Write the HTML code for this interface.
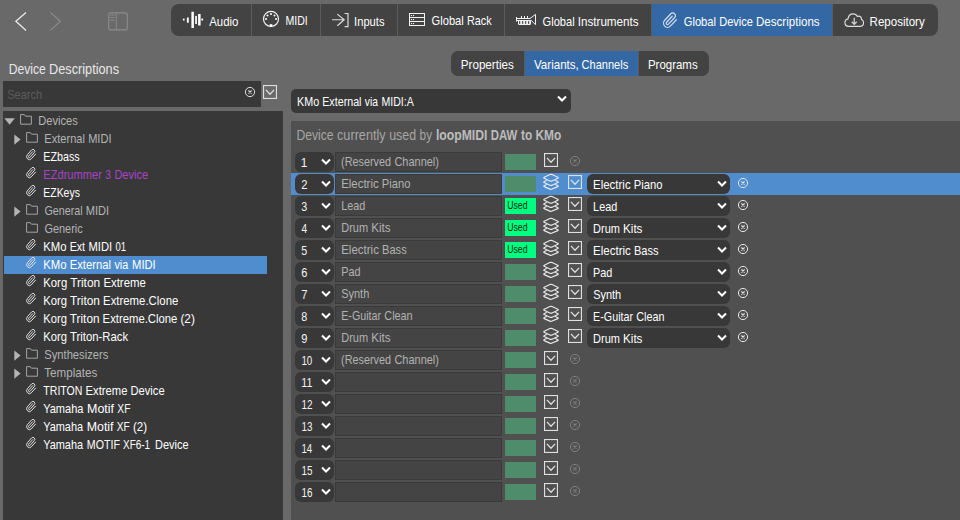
<!DOCTYPE html>
<html><head><meta charset="utf-8"><title>Global Device Descriptions</title>
<style>
html,body{margin:0;padding:0}
body{width:960px;height:520px;overflow:hidden;background:#696969;position:relative;font-family:"Liberation Sans",sans-serif}
#app{position:absolute;left:0;top:0;width:960px;height:520px;overflow:hidden}
#app div,#app svg,#app span{position:absolute}
#app span{left:0;white-space:pre;line-height:1;transform-origin:0 50%;display:block}
</style></head><body><div id="app">
<svg style="left:14px;top:11px" width="14" height="21" viewBox="0 0 14 21" ><path d="M12 1.4 L1.9 10.3 L12 19.4" fill="none" stroke="#ececec" stroke-width="1.3"/></svg>
<svg style="left:49px;top:11px" width="14" height="21" viewBox="0 0 14 21" ><path d="M1.3 1.4 L11.4 10.3 L1.3 19.4" fill="none" stroke="#8e8e8e" stroke-width="1.1"/></svg>
<svg style="left:107px;top:11px" width="22" height="21" viewBox="0 0 22 21" ><rect x="1.7" y="1.9" width="18.6" height="17" rx="2" fill="none" stroke="#8c8c8c" stroke-width="1.1"/><path d="M9.3 2V19M3.2 4.1h4.6M3.2 6.5h4.6M3.2 9.1h4.6" stroke="#8c8c8c" stroke-width="0.9" fill="none"/></svg>
<div style="left:171px;top:4px;width:767px;height:32px;background:#434343;border-radius:8px"></div>
<div style="left:652px;top:4px;width:180px;height:32px;background:#3468a4;"></div>
<div style="left:251px;top:4px;width:1px;height:32px;background:#5c5c5c;"></div>
<div style="left:320px;top:4px;width:1px;height:32px;background:#5c5c5c;"></div>
<div style="left:397px;top:4px;width:1px;height:32px;background:#5c5c5c;"></div>
<div style="left:504px;top:4px;width:1px;height:32px;background:#5c5c5c;"></div>
<div style="left:651px;top:4px;width:1px;height:32px;background:#5c5c5c;"></div>
<div style="left:832px;top:4px;width:1px;height:32px;background:#5c5c5c;"></div>
<svg style="left:182px;top:11px" width="22" height="18" viewBox="0 0 22 18" ><g fill="#fff"><rect x="0.9" y="7.6" width="1.7" height="1.9"/><rect x="4.9" y="6.5" width="1.9" height="5.2"/><rect x="9.4" y="0.75" width="2.5" height="16.3"/><rect x="13.2" y="4.9" width="1.7" height="8.1"/><rect x="16.1" y="3" width="2.5" height="11.5"/><rect x="19.3" y="7.6" width="1.8" height="1.9"/></g></svg>
<svg style="left:262px;top:10px" width="18" height="18" viewBox="0 0 18 18" ><circle cx="9" cy="8.9" r="7.5" fill="none" stroke="#f4f4f4" stroke-width="1.2"/><g fill="#fff"><circle cx="4" cy="9" r="1"/><circle cx="5.5" cy="5.5" r="1"/><circle cx="9" cy="4" r="1"/><circle cx="12.5" cy="5.5" r="1"/><circle cx="14" cy="9" r="1"/><rect x="7.7" y="14.2" width="2.6" height="2.4"/></g></svg>
<svg style="left:331px;top:12px" width="18" height="16" viewBox="0 0 18 16" ><path d="M1.1 7.75h12M6.3 2.1l6.9 5.65-6.9 5.95M13.6 1.5h3.4v13.1h-3.4" fill="none" stroke="#dcdcdc" stroke-width="1.2"/></svg>
<svg style="left:408px;top:12px" width="18" height="15" viewBox="0 0 18 15" ><g fill="none" stroke="#f2f2f2" stroke-width="1"><rect x="1.5" y="1.5" width="15" height="12"/><path d="M1.5 5.5h15M1.5 9.5h15"/></g><g fill="#f2f2f2"><rect x="3" y="3" width="1.1" height="1.1"/><rect x="5" y="3" width="1.1" height="1.1"/><rect x="3" y="7" width="1.1" height="1.1"/><rect x="5" y="7" width="1.1" height="1.1"/><rect x="3" y="11" width="1.1" height="1.1"/><rect x="5" y="11" width="1.1" height="1.1"/></g></svg>
<svg style="left:515px;top:13px" width="22" height="13" viewBox="0 0 22 13" ><g fill="#f0f0f0"><rect x="1" y="4" width="1" height="4.6"/><rect x="1" y="5" width="14.5" height="1"/><rect x="1" y="7" width="15.5" height="1"/><rect x="6" y="3" width="1" height="2"/><rect x="9" y="3" width="1" height="2"/><rect x="12" y="3" width="1" height="2"/><rect x="3" y="7" width="13" height="5" rx="1.2"/></g><g fill="#434343"><rect x="4.1" y="8.1" width="1.1" height="2.8"/><rect x="7.1" y="8.1" width="1.1" height="2.8"/><rect x="10.1" y="8.1" width="1.1" height="2.8"/><rect x="13.1" y="8.1" width="1.1" height="2.8"/></g><path d="M15 5.5L20.5 1.4V11.7L16.3 7.6" fill="none" stroke="#f0f0f0" stroke-width="1" stroke-linejoin="round"/></svg>
<svg style="left:661px;top:11px" width="18" height="18" viewBox="0 0 18 18" ><path transform="translate(1.24,1.0) scale(0.66,0.70)" d="M21.44 11.05l-9.19 9.19a6 6 0 0 1-8.49-8.49l9.19-9.19a4 4 0 0 1 5.66 5.66l-9.2 9.19a2 2 0 0 1-2.83-2.83l8.49-8.48" fill="none" stroke="#d6e1ef" stroke-width="1.75" stroke-linecap="round" stroke-linejoin="round"/></svg>
<svg style="left:843.66px;top:11.65px" width="20.7" height="16.7" viewBox="0 0 22 18" preserveAspectRatio="none"><path d="M5.2 15.5C2.6 15.5 1 13.6 1 11.5C1 9.4 2.3 7.8 4.3 7.4C4.6 4.3 6.8 2 9.6 2C11.6 2 13.2 3 14 4.7C14.4 4.6 14.9 4.5 15.4 4.5C17.4 4.5 18.6 6 18.6 8.2C20 8.8 20.8 10.2 20.8 11.6C20.8 13.8 19.2 15.5 17 15.5Z" fill="none" stroke="#dcdcdc" stroke-width="1.2"/><path d="M10.9 6.2V13M8.2 10.6l2.7 2.7 2.7-2.7" fill="none" stroke="#cfcfcf" stroke-width="1.4"/></svg>
<div style="left:451px;top:51px;width:258px;height:25px;background:#434343;border-radius:7px"></div>
<div style="left:525px;top:51px;width:114px;height:25px;background:#3468a4;"></div>
<div style="left:524px;top:51px;width:1px;height:25px;background:#5c5c5c;"></div>
<div style="left:638px;top:51px;width:1px;height:25px;background:#5c5c5c;"></div>
<div style="left:3px;top:81px;width:258px;height:26px;background:#383838;"></div>
<svg style="left:244px;top:86px" width="12" height="12" viewBox="0 0 12 12" ><circle cx="6" cy="6" r="4.6" fill="none" stroke="#e0e0e0" stroke-width="1"/><path d="M4.4 4.5l3.2 3.1M7.6 4.5l-3.2 3.1" stroke="#e0e0e0" stroke-width="1.1"/></svg>
<svg style="left:263px;top:85px" width="14" height="14" viewBox="0 0 14 14" ><rect x="0.55" y="0.55" width="12.9" height="12.9" fill="none" stroke="#e0e0e0" stroke-width="1.1"/><path d="M2.9 4.9l4.1 4.3 4.1-4.3" fill="none" stroke="#e0e0e0" stroke-width="1.3"/></svg>
<div style="left:3px;top:111px;width:280px;height:409px;background:#383838;"></div>
<div style="left:4px;top:256px;width:263px;height:18px;background:#4f8dcf;"></div>
<svg style="left:4px;top:117px" width="12" height="9" viewBox="0 0 12 9" ><path d="M0.3 1.2h10.6L5.6 7.8z" fill="#b4b4b4"/></svg>
<svg style="left:20px;top:114.2px" width="12" height="11" viewBox="0 0 12 11" ><path d="M0.6 10.2V0.6h3.7l1.1 1.6h6v8z" fill="none" stroke="#ababab" stroke-width="0.95"/></svg>
<svg style="left:14px;top:134px" width="7" height="12" viewBox="0 0 7 12" ><path d="M0.3 0.5v10.2l6.3-5.1z" fill="#b4b4b4"/></svg>
<svg style="left:26px;top:132.2px" width="12" height="11" viewBox="0 0 12 11" ><path d="M0.6 10.2V0.6h3.7l1.1 1.6h6v8z" fill="none" stroke="#ababab" stroke-width="0.95"/></svg>
<svg style="left:25.5px;top:149px" width="12" height="13" viewBox="0 0 12 13" ><path transform="translate(-0.25,-0.35) scale(0.455,0.50)" d="M21.44 11.05l-9.19 9.19a6 6 0 0 1-8.49-8.49l9.19-9.19a4 4 0 0 1 5.66 5.66l-9.2 9.19a2 2 0 0 1-2.83-2.83l8.49-8.48" fill="none" stroke="#e8e8e8" stroke-width="2" stroke-linecap="round" stroke-linejoin="round"/></svg>
<svg style="left:25.5px;top:167px" width="12" height="13" viewBox="0 0 12 13" ><path transform="translate(-0.25,-0.35) scale(0.455,0.50)" d="M21.44 11.05l-9.19 9.19a6 6 0 0 1-8.49-8.49l9.19-9.19a4 4 0 0 1 5.66 5.66l-9.2 9.19a2 2 0 0 1-2.83-2.83l8.49-8.48" fill="none" stroke="#e8e8e8" stroke-width="2" stroke-linecap="round" stroke-linejoin="round"/></svg>
<svg style="left:25.5px;top:185px" width="12" height="13" viewBox="0 0 12 13" ><path transform="translate(-0.25,-0.35) scale(0.455,0.50)" d="M21.44 11.05l-9.19 9.19a6 6 0 0 1-8.49-8.49l9.19-9.19a4 4 0 0 1 5.66 5.66l-9.2 9.19a2 2 0 0 1-2.83-2.83l8.49-8.48" fill="none" stroke="#e8e8e8" stroke-width="2" stroke-linecap="round" stroke-linejoin="round"/></svg>
<svg style="left:14px;top:206px" width="7" height="12" viewBox="0 0 7 12" ><path d="M0.3 0.5v10.2l6.3-5.1z" fill="#b4b4b4"/></svg>
<svg style="left:26px;top:204.2px" width="12" height="11" viewBox="0 0 12 11" ><path d="M0.6 10.2V0.6h3.7l1.1 1.6h6v8z" fill="none" stroke="#ababab" stroke-width="0.95"/></svg>
<svg style="left:26px;top:222.2px" width="12" height="11" viewBox="0 0 12 11" ><path d="M0.6 10.2V0.6h3.7l1.1 1.6h6v8z" fill="none" stroke="#ababab" stroke-width="0.95"/></svg>
<svg style="left:25.5px;top:239px" width="12" height="13" viewBox="0 0 12 13" ><path transform="translate(-0.25,-0.35) scale(0.455,0.50)" d="M21.44 11.05l-9.19 9.19a6 6 0 0 1-8.49-8.49l9.19-9.19a4 4 0 0 1 5.66 5.66l-9.2 9.19a2 2 0 0 1-2.83-2.83l8.49-8.48" fill="none" stroke="#e8e8e8" stroke-width="2" stroke-linecap="round" stroke-linejoin="round"/></svg>
<svg style="left:25.5px;top:257px" width="12" height="13" viewBox="0 0 12 13" ><path transform="translate(-0.25,-0.35) scale(0.455,0.50)" d="M21.44 11.05l-9.19 9.19a6 6 0 0 1-8.49-8.49l9.19-9.19a4 4 0 0 1 5.66 5.66l-9.2 9.19a2 2 0 0 1-2.83-2.83l8.49-8.48" fill="none" stroke="#e8e8e8" stroke-width="2" stroke-linecap="round" stroke-linejoin="round"/></svg>
<svg style="left:25.5px;top:275px" width="12" height="13" viewBox="0 0 12 13" ><path transform="translate(-0.25,-0.35) scale(0.455,0.50)" d="M21.44 11.05l-9.19 9.19a6 6 0 0 1-8.49-8.49l9.19-9.19a4 4 0 0 1 5.66 5.66l-9.2 9.19a2 2 0 0 1-2.83-2.83l8.49-8.48" fill="none" stroke="#e8e8e8" stroke-width="2" stroke-linecap="round" stroke-linejoin="round"/></svg>
<svg style="left:25.5px;top:293px" width="12" height="13" viewBox="0 0 12 13" ><path transform="translate(-0.25,-0.35) scale(0.455,0.50)" d="M21.44 11.05l-9.19 9.19a6 6 0 0 1-8.49-8.49l9.19-9.19a4 4 0 0 1 5.66 5.66l-9.2 9.19a2 2 0 0 1-2.83-2.83l8.49-8.48" fill="none" stroke="#e8e8e8" stroke-width="2" stroke-linecap="round" stroke-linejoin="round"/></svg>
<svg style="left:25.5px;top:311px" width="12" height="13" viewBox="0 0 12 13" ><path transform="translate(-0.25,-0.35) scale(0.455,0.50)" d="M21.44 11.05l-9.19 9.19a6 6 0 0 1-8.49-8.49l9.19-9.19a4 4 0 0 1 5.66 5.66l-9.2 9.19a2 2 0 0 1-2.83-2.83l8.49-8.48" fill="none" stroke="#e8e8e8" stroke-width="2" stroke-linecap="round" stroke-linejoin="round"/></svg>
<svg style="left:25.5px;top:329px" width="12" height="13" viewBox="0 0 12 13" ><path transform="translate(-0.25,-0.35) scale(0.455,0.50)" d="M21.44 11.05l-9.19 9.19a6 6 0 0 1-8.49-8.49l9.19-9.19a4 4 0 0 1 5.66 5.66l-9.2 9.19a2 2 0 0 1-2.83-2.83l8.49-8.48" fill="none" stroke="#e8e8e8" stroke-width="2" stroke-linecap="round" stroke-linejoin="round"/></svg>
<svg style="left:14px;top:350px" width="7" height="12" viewBox="0 0 7 12" ><path d="M0.3 0.5v10.2l6.3-5.1z" fill="#b4b4b4"/></svg>
<svg style="left:26px;top:348.2px" width="12" height="11" viewBox="0 0 12 11" ><path d="M0.6 10.2V0.6h3.7l1.1 1.6h6v8z" fill="none" stroke="#ababab" stroke-width="0.95"/></svg>
<svg style="left:14px;top:368px" width="7" height="12" viewBox="0 0 7 12" ><path d="M0.3 0.5v10.2l6.3-5.1z" fill="#b4b4b4"/></svg>
<svg style="left:26px;top:366.2px" width="12" height="11" viewBox="0 0 12 11" ><path d="M0.6 10.2V0.6h3.7l1.1 1.6h6v8z" fill="none" stroke="#ababab" stroke-width="0.95"/></svg>
<svg style="left:25.5px;top:383px" width="12" height="13" viewBox="0 0 12 13" ><path transform="translate(-0.25,-0.35) scale(0.455,0.50)" d="M21.44 11.05l-9.19 9.19a6 6 0 0 1-8.49-8.49l9.19-9.19a4 4 0 0 1 5.66 5.66l-9.2 9.19a2 2 0 0 1-2.83-2.83l8.49-8.48" fill="none" stroke="#e8e8e8" stroke-width="2" stroke-linecap="round" stroke-linejoin="round"/></svg>
<svg style="left:25.5px;top:401px" width="12" height="13" viewBox="0 0 12 13" ><path transform="translate(-0.25,-0.35) scale(0.455,0.50)" d="M21.44 11.05l-9.19 9.19a6 6 0 0 1-8.49-8.49l9.19-9.19a4 4 0 0 1 5.66 5.66l-9.2 9.19a2 2 0 0 1-2.83-2.83l8.49-8.48" fill="none" stroke="#e8e8e8" stroke-width="2" stroke-linecap="round" stroke-linejoin="round"/></svg>
<svg style="left:25.5px;top:419px" width="12" height="13" viewBox="0 0 12 13" ><path transform="translate(-0.25,-0.35) scale(0.455,0.50)" d="M21.44 11.05l-9.19 9.19a6 6 0 0 1-8.49-8.49l9.19-9.19a4 4 0 0 1 5.66 5.66l-9.2 9.19a2 2 0 0 1-2.83-2.83l8.49-8.48" fill="none" stroke="#e8e8e8" stroke-width="2" stroke-linecap="round" stroke-linejoin="round"/></svg>
<svg style="left:25.5px;top:437px" width="12" height="13" viewBox="0 0 12 13" ><path transform="translate(-0.25,-0.35) scale(0.455,0.50)" d="M21.44 11.05l-9.19 9.19a6 6 0 0 1-8.49-8.49l9.19-9.19a4 4 0 0 1 5.66 5.66l-9.2 9.19a2 2 0 0 1-2.83-2.83l8.49-8.48" fill="none" stroke="#e8e8e8" stroke-width="2" stroke-linecap="round" stroke-linejoin="round"/></svg>
<div style="left:291px;top:89px;width:280px;height:24px;background:#383838;border-radius:5px"></div>
<svg style="left:556.4px;top:94.8px" width="12" height="8" viewBox="0 0 12 8" ><path d="M2 1.5l4 4 4-4" fill="none" stroke="#fff" stroke-width="2"/></svg>
<div style="left:291px;top:121px;width:669px;height:399px;background:#505050;"></div>
<div style="left:295px;top:152px;width:39px;height:20px;background:#383838;border-radius:6px"></div>
<svg style="left:319.5px;top:158.2px" width="12" height="8" viewBox="0 0 12 8" ><path d="M2 1.5l4 4 4-4" fill="none" stroke="#fff" stroke-width="2"/></svg>
<div style="left:335px;top:152px;width:167px;height:20px;background:#444444;box-sizing:border-box;border:1px solid #3a3a3a"></div>
<div style="left:505px;top:154px;width:31px;height:16px;background:#4e8c6c;"></div>
<svg style="left:544px;top:153px" width="14" height="14" viewBox="0 0 14 14" ><rect x="0.55" y="0.55" width="12.9" height="12.9" fill="none" stroke="#e0e0e0" stroke-width="1.1"/><path d="M2.9 4.9l4.1 4.3 4.1-4.3" fill="none" stroke="#e0e0e0" stroke-width="1.3"/></svg>
<svg style="left:569px;top:155px" width="12" height="12" viewBox="0 0 12 12" ><circle cx="6" cy="6" r="4.6" fill="none" stroke="#808080" stroke-width="1"/><path d="M4.4 4.5l3.2 3.1M7.6 4.5l-3.2 3.1" stroke="#808080" stroke-width="1.1"/></svg>
<div style="left:291px;top:173px;width:669px;height:22px;background:#4f8dcf;"></div>
<div style="left:295px;top:174px;width:39px;height:20px;background:#383838;border-radius:6px"></div>
<svg style="left:319.5px;top:180.2px" width="12" height="8" viewBox="0 0 12 8" ><path d="M2 1.5l4 4 4-4" fill="none" stroke="#fff" stroke-width="2"/></svg>
<div style="left:335px;top:174px;width:167px;height:20px;background:#444444;box-sizing:border-box;border:1px solid #3a3a3a"></div>
<div style="left:505px;top:176px;width:31px;height:16px;background:#4e8c6c;"></div>
<svg style="left:542px;top:173px" width="18" height="18" viewBox="0 0 18 18" ><g fill="none" stroke="#eaeaea" stroke-width="1.15" stroke-linejoin="round" stroke-linecap="round"><path d="M7.9 1.6Q9 1.1 10.1 1.6L15.8 4.2Q16.8 4.7 15.8 5.2L10.1 7.9Q9 8.4 7.9 7.9L2.2 5.2Q1.2 4.7 2.2 4.2z"/><path d="M4.4 7.6L2.1 8.65Q1.2 9.1 2.2 9.6L7.9 12.2Q9 12.7 10.1 12.2L15.8 9.6Q16.8 9.1 15.9 8.65L13.6 7.6"/><path d="M4.4 11.6L2.1 12.65Q1.2 13.1 2.2 13.6L7.9 16.1Q9 16.6 10.1 16.1L15.8 13.6Q16.8 13.1 15.9 12.65L13.6 11.6"/></g></svg>
<svg style="left:568px;top:175px" width="14" height="14" viewBox="0 0 14 14" ><rect x="0.55" y="0.55" width="12.9" height="12.9" fill="none" stroke="#e0e0e0" stroke-width="1.1"/><path d="M2.9 4.9l4.1 4.3 4.1-4.3" fill="none" stroke="#e0e0e0" stroke-width="1.3"/></svg>
<div style="left:587px;top:174px;width:143px;height:20px;background:#383838;border-radius:6px"></div>
<svg style="left:715.9px;top:180.4px" width="12" height="8" viewBox="0 0 12 8" ><path d="M2 1.5l4 4 4-4" fill="none" stroke="#fff" stroke-width="2"/></svg>
<svg style="left:737px;top:177px" width="12" height="12" viewBox="0 0 12 12" ><circle cx="6" cy="6" r="4.6" fill="none" stroke="#e6e6e6" stroke-width="1"/><path d="M4.4 4.5l3.2 3.1M7.6 4.5l-3.2 3.1" stroke="#e6e6e6" stroke-width="1.1"/></svg>
<div style="left:295px;top:196px;width:39px;height:20px;background:#383838;border-radius:6px"></div>
<svg style="left:319.5px;top:202.2px" width="12" height="8" viewBox="0 0 12 8" ><path d="M2 1.5l4 4 4-4" fill="none" stroke="#fff" stroke-width="2"/></svg>
<div style="left:335px;top:196px;width:167px;height:20px;background:#444444;box-sizing:border-box;border:1px solid #3a3a3a"></div>
<div style="left:505px;top:198px;width:31px;height:16px;background:#00ff80;"></div>
<svg style="left:542px;top:195px" width="18" height="18" viewBox="0 0 18 18" ><g fill="none" stroke="#eaeaea" stroke-width="1.15" stroke-linejoin="round" stroke-linecap="round"><path d="M7.9 1.6Q9 1.1 10.1 1.6L15.8 4.2Q16.8 4.7 15.8 5.2L10.1 7.9Q9 8.4 7.9 7.9L2.2 5.2Q1.2 4.7 2.2 4.2z"/><path d="M4.4 7.6L2.1 8.65Q1.2 9.1 2.2 9.6L7.9 12.2Q9 12.7 10.1 12.2L15.8 9.6Q16.8 9.1 15.9 8.65L13.6 7.6"/><path d="M4.4 11.6L2.1 12.65Q1.2 13.1 2.2 13.6L7.9 16.1Q9 16.6 10.1 16.1L15.8 13.6Q16.8 13.1 15.9 12.65L13.6 11.6"/></g></svg>
<svg style="left:568px;top:197px" width="14" height="14" viewBox="0 0 14 14" ><rect x="0.55" y="0.55" width="12.9" height="12.9" fill="none" stroke="#e0e0e0" stroke-width="1.1"/><path d="M2.9 4.9l4.1 4.3 4.1-4.3" fill="none" stroke="#e0e0e0" stroke-width="1.3"/></svg>
<div style="left:587px;top:196px;width:143px;height:20px;background:#383838;border-radius:6px"></div>
<svg style="left:715.9px;top:202.4px" width="12" height="8" viewBox="0 0 12 8" ><path d="M2 1.5l4 4 4-4" fill="none" stroke="#fff" stroke-width="2"/></svg>
<svg style="left:737px;top:199px" width="12" height="12" viewBox="0 0 12 12" ><circle cx="6" cy="6" r="4.6" fill="none" stroke="#e6e6e6" stroke-width="1"/><path d="M4.4 4.5l3.2 3.1M7.6 4.5l-3.2 3.1" stroke="#e6e6e6" stroke-width="1.1"/></svg>
<div style="left:295px;top:218px;width:39px;height:20px;background:#383838;border-radius:6px"></div>
<svg style="left:319.5px;top:224.2px" width="12" height="8" viewBox="0 0 12 8" ><path d="M2 1.5l4 4 4-4" fill="none" stroke="#fff" stroke-width="2"/></svg>
<div style="left:335px;top:218px;width:167px;height:20px;background:#444444;box-sizing:border-box;border:1px solid #3a3a3a"></div>
<div style="left:505px;top:220px;width:31px;height:16px;background:#00ff80;"></div>
<svg style="left:542px;top:217px" width="18" height="18" viewBox="0 0 18 18" ><g fill="none" stroke="#eaeaea" stroke-width="1.15" stroke-linejoin="round" stroke-linecap="round"><path d="M7.9 1.6Q9 1.1 10.1 1.6L15.8 4.2Q16.8 4.7 15.8 5.2L10.1 7.9Q9 8.4 7.9 7.9L2.2 5.2Q1.2 4.7 2.2 4.2z"/><path d="M4.4 7.6L2.1 8.65Q1.2 9.1 2.2 9.6L7.9 12.2Q9 12.7 10.1 12.2L15.8 9.6Q16.8 9.1 15.9 8.65L13.6 7.6"/><path d="M4.4 11.6L2.1 12.65Q1.2 13.1 2.2 13.6L7.9 16.1Q9 16.6 10.1 16.1L15.8 13.6Q16.8 13.1 15.9 12.65L13.6 11.6"/></g></svg>
<svg style="left:568px;top:219px" width="14" height="14" viewBox="0 0 14 14" ><rect x="0.55" y="0.55" width="12.9" height="12.9" fill="none" stroke="#e0e0e0" stroke-width="1.1"/><path d="M2.9 4.9l4.1 4.3 4.1-4.3" fill="none" stroke="#e0e0e0" stroke-width="1.3"/></svg>
<div style="left:587px;top:218px;width:143px;height:20px;background:#383838;border-radius:6px"></div>
<svg style="left:715.9px;top:224.4px" width="12" height="8" viewBox="0 0 12 8" ><path d="M2 1.5l4 4 4-4" fill="none" stroke="#fff" stroke-width="2"/></svg>
<svg style="left:737px;top:221px" width="12" height="12" viewBox="0 0 12 12" ><circle cx="6" cy="6" r="4.6" fill="none" stroke="#e6e6e6" stroke-width="1"/><path d="M4.4 4.5l3.2 3.1M7.6 4.5l-3.2 3.1" stroke="#e6e6e6" stroke-width="1.1"/></svg>
<div style="left:295px;top:240px;width:39px;height:20px;background:#383838;border-radius:6px"></div>
<svg style="left:319.5px;top:246.2px" width="12" height="8" viewBox="0 0 12 8" ><path d="M2 1.5l4 4 4-4" fill="none" stroke="#fff" stroke-width="2"/></svg>
<div style="left:335px;top:240px;width:167px;height:20px;background:#444444;box-sizing:border-box;border:1px solid #3a3a3a"></div>
<div style="left:505px;top:242px;width:31px;height:16px;background:#00ff80;"></div>
<svg style="left:542px;top:239px" width="18" height="18" viewBox="0 0 18 18" ><g fill="none" stroke="#eaeaea" stroke-width="1.15" stroke-linejoin="round" stroke-linecap="round"><path d="M7.9 1.6Q9 1.1 10.1 1.6L15.8 4.2Q16.8 4.7 15.8 5.2L10.1 7.9Q9 8.4 7.9 7.9L2.2 5.2Q1.2 4.7 2.2 4.2z"/><path d="M4.4 7.6L2.1 8.65Q1.2 9.1 2.2 9.6L7.9 12.2Q9 12.7 10.1 12.2L15.8 9.6Q16.8 9.1 15.9 8.65L13.6 7.6"/><path d="M4.4 11.6L2.1 12.65Q1.2 13.1 2.2 13.6L7.9 16.1Q9 16.6 10.1 16.1L15.8 13.6Q16.8 13.1 15.9 12.65L13.6 11.6"/></g></svg>
<svg style="left:568px;top:241px" width="14" height="14" viewBox="0 0 14 14" ><rect x="0.55" y="0.55" width="12.9" height="12.9" fill="none" stroke="#e0e0e0" stroke-width="1.1"/><path d="M2.9 4.9l4.1 4.3 4.1-4.3" fill="none" stroke="#e0e0e0" stroke-width="1.3"/></svg>
<div style="left:587px;top:240px;width:143px;height:20px;background:#383838;border-radius:6px"></div>
<svg style="left:715.9px;top:246.4px" width="12" height="8" viewBox="0 0 12 8" ><path d="M2 1.5l4 4 4-4" fill="none" stroke="#fff" stroke-width="2"/></svg>
<svg style="left:737px;top:243px" width="12" height="12" viewBox="0 0 12 12" ><circle cx="6" cy="6" r="4.6" fill="none" stroke="#e6e6e6" stroke-width="1"/><path d="M4.4 4.5l3.2 3.1M7.6 4.5l-3.2 3.1" stroke="#e6e6e6" stroke-width="1.1"/></svg>
<div style="left:295px;top:262px;width:39px;height:20px;background:#383838;border-radius:6px"></div>
<svg style="left:319.5px;top:268.2px" width="12" height="8" viewBox="0 0 12 8" ><path d="M2 1.5l4 4 4-4" fill="none" stroke="#fff" stroke-width="2"/></svg>
<div style="left:335px;top:262px;width:167px;height:20px;background:#444444;box-sizing:border-box;border:1px solid #3a3a3a"></div>
<div style="left:505px;top:264px;width:31px;height:16px;background:#4e8c6c;"></div>
<svg style="left:542px;top:261px" width="18" height="18" viewBox="0 0 18 18" ><g fill="none" stroke="#eaeaea" stroke-width="1.15" stroke-linejoin="round" stroke-linecap="round"><path d="M7.9 1.6Q9 1.1 10.1 1.6L15.8 4.2Q16.8 4.7 15.8 5.2L10.1 7.9Q9 8.4 7.9 7.9L2.2 5.2Q1.2 4.7 2.2 4.2z"/><path d="M4.4 7.6L2.1 8.65Q1.2 9.1 2.2 9.6L7.9 12.2Q9 12.7 10.1 12.2L15.8 9.6Q16.8 9.1 15.9 8.65L13.6 7.6"/><path d="M4.4 11.6L2.1 12.65Q1.2 13.1 2.2 13.6L7.9 16.1Q9 16.6 10.1 16.1L15.8 13.6Q16.8 13.1 15.9 12.65L13.6 11.6"/></g></svg>
<svg style="left:568px;top:263px" width="14" height="14" viewBox="0 0 14 14" ><rect x="0.55" y="0.55" width="12.9" height="12.9" fill="none" stroke="#e0e0e0" stroke-width="1.1"/><path d="M2.9 4.9l4.1 4.3 4.1-4.3" fill="none" stroke="#e0e0e0" stroke-width="1.3"/></svg>
<div style="left:587px;top:262px;width:143px;height:20px;background:#383838;border-radius:6px"></div>
<svg style="left:715.9px;top:268.4px" width="12" height="8" viewBox="0 0 12 8" ><path d="M2 1.5l4 4 4-4" fill="none" stroke="#fff" stroke-width="2"/></svg>
<svg style="left:737px;top:265px" width="12" height="12" viewBox="0 0 12 12" ><circle cx="6" cy="6" r="4.6" fill="none" stroke="#e6e6e6" stroke-width="1"/><path d="M4.4 4.5l3.2 3.1M7.6 4.5l-3.2 3.1" stroke="#e6e6e6" stroke-width="1.1"/></svg>
<div style="left:295px;top:284px;width:39px;height:20px;background:#383838;border-radius:6px"></div>
<svg style="left:319.5px;top:290.2px" width="12" height="8" viewBox="0 0 12 8" ><path d="M2 1.5l4 4 4-4" fill="none" stroke="#fff" stroke-width="2"/></svg>
<div style="left:335px;top:284px;width:167px;height:20px;background:#444444;box-sizing:border-box;border:1px solid #3a3a3a"></div>
<div style="left:505px;top:286px;width:31px;height:16px;background:#4e8c6c;"></div>
<svg style="left:542px;top:283px" width="18" height="18" viewBox="0 0 18 18" ><g fill="none" stroke="#eaeaea" stroke-width="1.15" stroke-linejoin="round" stroke-linecap="round"><path d="M7.9 1.6Q9 1.1 10.1 1.6L15.8 4.2Q16.8 4.7 15.8 5.2L10.1 7.9Q9 8.4 7.9 7.9L2.2 5.2Q1.2 4.7 2.2 4.2z"/><path d="M4.4 7.6L2.1 8.65Q1.2 9.1 2.2 9.6L7.9 12.2Q9 12.7 10.1 12.2L15.8 9.6Q16.8 9.1 15.9 8.65L13.6 7.6"/><path d="M4.4 11.6L2.1 12.65Q1.2 13.1 2.2 13.6L7.9 16.1Q9 16.6 10.1 16.1L15.8 13.6Q16.8 13.1 15.9 12.65L13.6 11.6"/></g></svg>
<svg style="left:568px;top:285px" width="14" height="14" viewBox="0 0 14 14" ><rect x="0.55" y="0.55" width="12.9" height="12.9" fill="none" stroke="#e0e0e0" stroke-width="1.1"/><path d="M2.9 4.9l4.1 4.3 4.1-4.3" fill="none" stroke="#e0e0e0" stroke-width="1.3"/></svg>
<div style="left:587px;top:284px;width:143px;height:20px;background:#383838;border-radius:6px"></div>
<svg style="left:715.9px;top:290.4px" width="12" height="8" viewBox="0 0 12 8" ><path d="M2 1.5l4 4 4-4" fill="none" stroke="#fff" stroke-width="2"/></svg>
<svg style="left:737px;top:287px" width="12" height="12" viewBox="0 0 12 12" ><circle cx="6" cy="6" r="4.6" fill="none" stroke="#e6e6e6" stroke-width="1"/><path d="M4.4 4.5l3.2 3.1M7.6 4.5l-3.2 3.1" stroke="#e6e6e6" stroke-width="1.1"/></svg>
<div style="left:295px;top:306px;width:39px;height:20px;background:#383838;border-radius:6px"></div>
<svg style="left:319.5px;top:312.2px" width="12" height="8" viewBox="0 0 12 8" ><path d="M2 1.5l4 4 4-4" fill="none" stroke="#fff" stroke-width="2"/></svg>
<div style="left:335px;top:306px;width:167px;height:20px;background:#444444;box-sizing:border-box;border:1px solid #3a3a3a"></div>
<div style="left:505px;top:308px;width:31px;height:16px;background:#4e8c6c;"></div>
<svg style="left:542px;top:305px" width="18" height="18" viewBox="0 0 18 18" ><g fill="none" stroke="#eaeaea" stroke-width="1.15" stroke-linejoin="round" stroke-linecap="round"><path d="M7.9 1.6Q9 1.1 10.1 1.6L15.8 4.2Q16.8 4.7 15.8 5.2L10.1 7.9Q9 8.4 7.9 7.9L2.2 5.2Q1.2 4.7 2.2 4.2z"/><path d="M4.4 7.6L2.1 8.65Q1.2 9.1 2.2 9.6L7.9 12.2Q9 12.7 10.1 12.2L15.8 9.6Q16.8 9.1 15.9 8.65L13.6 7.6"/><path d="M4.4 11.6L2.1 12.65Q1.2 13.1 2.2 13.6L7.9 16.1Q9 16.6 10.1 16.1L15.8 13.6Q16.8 13.1 15.9 12.65L13.6 11.6"/></g></svg>
<svg style="left:568px;top:307px" width="14" height="14" viewBox="0 0 14 14" ><rect x="0.55" y="0.55" width="12.9" height="12.9" fill="none" stroke="#e0e0e0" stroke-width="1.1"/><path d="M2.9 4.9l4.1 4.3 4.1-4.3" fill="none" stroke="#e0e0e0" stroke-width="1.3"/></svg>
<div style="left:587px;top:306px;width:143px;height:20px;background:#383838;border-radius:6px"></div>
<svg style="left:715.9px;top:312.4px" width="12" height="8" viewBox="0 0 12 8" ><path d="M2 1.5l4 4 4-4" fill="none" stroke="#fff" stroke-width="2"/></svg>
<svg style="left:737px;top:309px" width="12" height="12" viewBox="0 0 12 12" ><circle cx="6" cy="6" r="4.6" fill="none" stroke="#e6e6e6" stroke-width="1"/><path d="M4.4 4.5l3.2 3.1M7.6 4.5l-3.2 3.1" stroke="#e6e6e6" stroke-width="1.1"/></svg>
<div style="left:295px;top:328px;width:39px;height:20px;background:#383838;border-radius:6px"></div>
<svg style="left:319.5px;top:334.2px" width="12" height="8" viewBox="0 0 12 8" ><path d="M2 1.5l4 4 4-4" fill="none" stroke="#fff" stroke-width="2"/></svg>
<div style="left:335px;top:328px;width:167px;height:20px;background:#444444;box-sizing:border-box;border:1px solid #3a3a3a"></div>
<div style="left:505px;top:330px;width:31px;height:16px;background:#4e8c6c;"></div>
<svg style="left:542px;top:327px" width="18" height="18" viewBox="0 0 18 18" ><g fill="none" stroke="#eaeaea" stroke-width="1.15" stroke-linejoin="round" stroke-linecap="round"><path d="M7.9 1.6Q9 1.1 10.1 1.6L15.8 4.2Q16.8 4.7 15.8 5.2L10.1 7.9Q9 8.4 7.9 7.9L2.2 5.2Q1.2 4.7 2.2 4.2z"/><path d="M4.4 7.6L2.1 8.65Q1.2 9.1 2.2 9.6L7.9 12.2Q9 12.7 10.1 12.2L15.8 9.6Q16.8 9.1 15.9 8.65L13.6 7.6"/><path d="M4.4 11.6L2.1 12.65Q1.2 13.1 2.2 13.6L7.9 16.1Q9 16.6 10.1 16.1L15.8 13.6Q16.8 13.1 15.9 12.65L13.6 11.6"/></g></svg>
<svg style="left:568px;top:329px" width="14" height="14" viewBox="0 0 14 14" ><rect x="0.55" y="0.55" width="12.9" height="12.9" fill="none" stroke="#e0e0e0" stroke-width="1.1"/><path d="M2.9 4.9l4.1 4.3 4.1-4.3" fill="none" stroke="#e0e0e0" stroke-width="1.3"/></svg>
<div style="left:587px;top:328px;width:143px;height:20px;background:#383838;border-radius:6px"></div>
<svg style="left:715.9px;top:334.4px" width="12" height="8" viewBox="0 0 12 8" ><path d="M2 1.5l4 4 4-4" fill="none" stroke="#fff" stroke-width="2"/></svg>
<svg style="left:737px;top:331px" width="12" height="12" viewBox="0 0 12 12" ><circle cx="6" cy="6" r="4.6" fill="none" stroke="#e6e6e6" stroke-width="1"/><path d="M4.4 4.5l3.2 3.1M7.6 4.5l-3.2 3.1" stroke="#e6e6e6" stroke-width="1.1"/></svg>
<div style="left:295px;top:350px;width:39px;height:20px;background:#383838;border-radius:6px"></div>
<svg style="left:319.5px;top:356.2px" width="12" height="8" viewBox="0 0 12 8" ><path d="M2 1.5l4 4 4-4" fill="none" stroke="#fff" stroke-width="2"/></svg>
<div style="left:335px;top:350px;width:167px;height:20px;background:#444444;box-sizing:border-box;border:1px solid #3a3a3a"></div>
<div style="left:505px;top:352px;width:31px;height:16px;background:#4e8c6c;"></div>
<svg style="left:544px;top:351px" width="14" height="14" viewBox="0 0 14 14" ><rect x="0.55" y="0.55" width="12.9" height="12.9" fill="none" stroke="#e0e0e0" stroke-width="1.1"/><path d="M2.9 4.9l4.1 4.3 4.1-4.3" fill="none" stroke="#e0e0e0" stroke-width="1.3"/></svg>
<svg style="left:569px;top:353px" width="12" height="12" viewBox="0 0 12 12" ><circle cx="6" cy="6" r="4.6" fill="none" stroke="#808080" stroke-width="1"/><path d="M4.4 4.5l3.2 3.1M7.6 4.5l-3.2 3.1" stroke="#808080" stroke-width="1.1"/></svg>
<div style="left:295px;top:372px;width:39px;height:20px;background:#383838;border-radius:6px"></div>
<svg style="left:319.5px;top:378.2px" width="12" height="8" viewBox="0 0 12 8" ><path d="M2 1.5l4 4 4-4" fill="none" stroke="#fff" stroke-width="2"/></svg>
<div style="left:335px;top:372px;width:167px;height:20px;background:#444444;box-sizing:border-box;border:1px solid #3a3a3a"></div>
<div style="left:505px;top:374px;width:31px;height:16px;background:#4e8c6c;"></div>
<svg style="left:544px;top:373px" width="14" height="14" viewBox="0 0 14 14" ><rect x="0.55" y="0.55" width="12.9" height="12.9" fill="none" stroke="#e0e0e0" stroke-width="1.1"/><path d="M2.9 4.9l4.1 4.3 4.1-4.3" fill="none" stroke="#e0e0e0" stroke-width="1.3"/></svg>
<svg style="left:569px;top:375px" width="12" height="12" viewBox="0 0 12 12" ><circle cx="6" cy="6" r="4.6" fill="none" stroke="#808080" stroke-width="1"/><path d="M4.4 4.5l3.2 3.1M7.6 4.5l-3.2 3.1" stroke="#808080" stroke-width="1.1"/></svg>
<div style="left:295px;top:394px;width:39px;height:20px;background:#383838;border-radius:6px"></div>
<svg style="left:319.5px;top:400.2px" width="12" height="8" viewBox="0 0 12 8" ><path d="M2 1.5l4 4 4-4" fill="none" stroke="#fff" stroke-width="2"/></svg>
<div style="left:335px;top:394px;width:167px;height:20px;background:#444444;box-sizing:border-box;border:1px solid #3a3a3a"></div>
<div style="left:505px;top:396px;width:31px;height:16px;background:#4e8c6c;"></div>
<svg style="left:544px;top:395px" width="14" height="14" viewBox="0 0 14 14" ><rect x="0.55" y="0.55" width="12.9" height="12.9" fill="none" stroke="#e0e0e0" stroke-width="1.1"/><path d="M2.9 4.9l4.1 4.3 4.1-4.3" fill="none" stroke="#e0e0e0" stroke-width="1.3"/></svg>
<svg style="left:569px;top:397px" width="12" height="12" viewBox="0 0 12 12" ><circle cx="6" cy="6" r="4.6" fill="none" stroke="#808080" stroke-width="1"/><path d="M4.4 4.5l3.2 3.1M7.6 4.5l-3.2 3.1" stroke="#808080" stroke-width="1.1"/></svg>
<div style="left:295px;top:416px;width:39px;height:20px;background:#383838;border-radius:6px"></div>
<svg style="left:319.5px;top:422.2px" width="12" height="8" viewBox="0 0 12 8" ><path d="M2 1.5l4 4 4-4" fill="none" stroke="#fff" stroke-width="2"/></svg>
<div style="left:335px;top:416px;width:167px;height:20px;background:#444444;box-sizing:border-box;border:1px solid #3a3a3a"></div>
<div style="left:505px;top:418px;width:31px;height:16px;background:#4e8c6c;"></div>
<svg style="left:544px;top:417px" width="14" height="14" viewBox="0 0 14 14" ><rect x="0.55" y="0.55" width="12.9" height="12.9" fill="none" stroke="#e0e0e0" stroke-width="1.1"/><path d="M2.9 4.9l4.1 4.3 4.1-4.3" fill="none" stroke="#e0e0e0" stroke-width="1.3"/></svg>
<svg style="left:569px;top:419px" width="12" height="12" viewBox="0 0 12 12" ><circle cx="6" cy="6" r="4.6" fill="none" stroke="#808080" stroke-width="1"/><path d="M4.4 4.5l3.2 3.1M7.6 4.5l-3.2 3.1" stroke="#808080" stroke-width="1.1"/></svg>
<div style="left:295px;top:438px;width:39px;height:20px;background:#383838;border-radius:6px"></div>
<svg style="left:319.5px;top:444.2px" width="12" height="8" viewBox="0 0 12 8" ><path d="M2 1.5l4 4 4-4" fill="none" stroke="#fff" stroke-width="2"/></svg>
<div style="left:335px;top:438px;width:167px;height:20px;background:#444444;box-sizing:border-box;border:1px solid #3a3a3a"></div>
<div style="left:505px;top:440px;width:31px;height:16px;background:#4e8c6c;"></div>
<svg style="left:544px;top:439px" width="14" height="14" viewBox="0 0 14 14" ><rect x="0.55" y="0.55" width="12.9" height="12.9" fill="none" stroke="#e0e0e0" stroke-width="1.1"/><path d="M2.9 4.9l4.1 4.3 4.1-4.3" fill="none" stroke="#e0e0e0" stroke-width="1.3"/></svg>
<svg style="left:569px;top:441px" width="12" height="12" viewBox="0 0 12 12" ><circle cx="6" cy="6" r="4.6" fill="none" stroke="#808080" stroke-width="1"/><path d="M4.4 4.5l3.2 3.1M7.6 4.5l-3.2 3.1" stroke="#808080" stroke-width="1.1"/></svg>
<div style="left:295px;top:460px;width:39px;height:20px;background:#383838;border-radius:6px"></div>
<svg style="left:319.5px;top:466.2px" width="12" height="8" viewBox="0 0 12 8" ><path d="M2 1.5l4 4 4-4" fill="none" stroke="#fff" stroke-width="2"/></svg>
<div style="left:335px;top:460px;width:167px;height:20px;background:#444444;box-sizing:border-box;border:1px solid #3a3a3a"></div>
<div style="left:505px;top:462px;width:31px;height:16px;background:#4e8c6c;"></div>
<svg style="left:544px;top:461px" width="14" height="14" viewBox="0 0 14 14" ><rect x="0.55" y="0.55" width="12.9" height="12.9" fill="none" stroke="#e0e0e0" stroke-width="1.1"/><path d="M2.9 4.9l4.1 4.3 4.1-4.3" fill="none" stroke="#e0e0e0" stroke-width="1.3"/></svg>
<svg style="left:569px;top:463px" width="12" height="12" viewBox="0 0 12 12" ><circle cx="6" cy="6" r="4.6" fill="none" stroke="#808080" stroke-width="1"/><path d="M4.4 4.5l3.2 3.1M7.6 4.5l-3.2 3.1" stroke="#808080" stroke-width="1.1"/></svg>
<div style="left:295px;top:482px;width:39px;height:20px;background:#383838;border-radius:6px"></div>
<svg style="left:319.5px;top:488.2px" width="12" height="8" viewBox="0 0 12 8" ><path d="M2 1.5l4 4 4-4" fill="none" stroke="#fff" stroke-width="2"/></svg>
<div style="left:335px;top:482px;width:167px;height:20px;background:#444444;box-sizing:border-box;border:1px solid #3a3a3a"></div>
<div style="left:505px;top:484px;width:31px;height:16px;background:#4e8c6c;"></div>
<svg style="left:544px;top:483px" width="14" height="14" viewBox="0 0 14 14" ><rect x="0.55" y="0.55" width="12.9" height="12.9" fill="none" stroke="#e0e0e0" stroke-width="1.1"/><path d="M2.9 4.9l4.1 4.3 4.1-4.3" fill="none" stroke="#e0e0e0" stroke-width="1.3"/></svg>
<svg style="left:569px;top:485px" width="12" height="12" viewBox="0 0 12 12" ><circle cx="6" cy="6" r="4.6" fill="none" stroke="#808080" stroke-width="1"/><path d="M4.4 4.5l3.2 3.1M7.6 4.5l-3.2 3.1" stroke="#808080" stroke-width="1.1"/></svg>
<span style="top:15.00px;font-size:13.0px;color:#fff;transform:translateX(209.23px) scaleX(0.8782)">Audio</span>
<span style="top:14.00px;font-size:13.0px;color:#fff;transform:translateX(285.48px) scaleX(0.8139)">MIDI</span>
<span style="top:15.00px;font-size:13.0px;color:#fff;transform:translateX(354.12px) scaleX(0.8562)">Inputs</span>
<span style="top:14.00px;font-size:13.0px;color:#fff;transform:translateX(431.59px) scaleX(0.8568)">Global </span>
<span style="top:14.00px;font-size:13.0px;color:#fff;transform:translateX(467.03px) scaleX(0.8306)">Rack</span>
<span style="top:15.00px;font-size:13.0px;color:#fff;transform:translateX(542.59px) scaleX(0.8542)">Global </span>
<span style="top:15.00px;font-size:13.0px;color:#fff;transform:translateX(577.77px) scaleX(0.8951)">Instruments</span>
<span style="top:15.00px;font-size:13.0px;color:#fff;transform:translateX(683.79px) scaleX(0.8564)">Global </span>
<span style="top:15.00px;font-size:13.0px;color:#fff;transform:translateX(719.19px) scaleX(0.8492)">Device </span>
<span style="top:15.00px;font-size:13.0px;color:#fff;transform:translateX(755.95px) scaleX(0.8908)">Descriptions</span>
<span style="top:15.00px;font-size:13.0px;color:#fff;transform:translateX(869.60px) scaleX(0.8862)">Repository</span>
<span style="top:58.00px;font-size:13.0px;color:#fff;transform:translateX(460.80px) scaleX(0.8941)">Properties</span>
<span style="top:58.00px;font-size:13.0px;color:#fff;transform:translateX(534.00px) scaleX(0.8907)">Variants, </span>
<span style="top:58.00px;font-size:13.0px;color:#fff;transform:translateX(581.56px) scaleX(0.8481)">Channels</span>
<span style="top:58.00px;font-size:13.0px;color:#fff;transform:translateX(647.91px) scaleX(0.8828)">Programs</span>
<span style="top:62.00px;font-size:14.0px;color:#e8e8e8;transform:translateX(8.66px) scaleX(0.8661)">Device </span>
<span style="top:62.00px;font-size:14.0px;color:#e8e8e8;transform:translateX(49.03px) scaleX(0.9084)">Descriptions</span>
<span style="top:88.66px;font-size:12.67px;color:#5c5c5c;transform:translateX(7.25px) scaleX(0.8680)">Search</span>
<span style="top:114.66px;font-size:12.67px;color:#b4b4b4;transform:translateX(38.28px) scaleX(0.8778)">Devices</span>
<span style="top:132.66px;font-size:12.67px;color:#b4b4b4;transform:translateX(44.27px) scaleX(0.8770)">External </span>
<span style="top:132.66px;font-size:12.67px;color:#b4b4b4;transform:translateX(88.17px) scaleX(0.8731)">MIDI</span>
<span style="top:150.66px;font-size:12.67px;color:#fff;transform:translateX(43.29px) scaleX(0.8473)">EZbass</span>
<span style="top:168.66px;font-size:12.67px;color:#a844c8;transform:translateX(43.27px) scaleX(0.8789)">EZdrummer </span>
<span style="top:168.66px;font-size:12.67px;color:#a844c8;transform:translateX(105.25px) scaleX(0.8179)">3 </span>
<span style="top:168.66px;font-size:12.67px;color:#a844c8;transform:translateX(114.41px) scaleX(0.8703)">Device</span>
<span style="top:186.66px;font-size:12.67px;color:#fff;transform:translateX(43.32px) scaleX(0.8245)">EZKeys</span>
<span style="top:204.66px;font-size:12.67px;color:#b4b4b4;transform:translateX(44.44px) scaleX(0.8476)">General </span>
<span style="top:204.66px;font-size:12.67px;color:#b4b4b4;transform:translateX(85.82px) scaleX(0.8751)">MIDI</span>
<span style="top:222.66px;font-size:12.67px;color:#b4b4b4;transform:translateX(44.43px) scaleX(0.8649)">Generic</span>
<span style="top:240.66px;font-size:12.67px;color:#fff;transform:translateX(43.27px) scaleX(0.8904)">KMo </span>
<span style="top:240.66px;font-size:12.67px;color:#fff;transform:translateX(69.65px) scaleX(0.8435)">Ext </span>
<span style="top:240.66px;font-size:12.67px;color:#fff;transform:translateX(88.54px) scaleX(0.8841)">MIDI </span>
<span style="top:240.66px;font-size:12.67px;color:#fff;transform:translateX(115.46px) scaleX(0.7530)">01</span>
<span style="top:258.67px;font-size:12.67px;color:#fff;transform:translateX(43.27px) scaleX(0.8935)">KMo </span>
<span style="top:258.67px;font-size:12.67px;color:#fff;transform:translateX(69.70px) scaleX(0.8904)">External </span>
<span style="top:258.67px;font-size:12.67px;color:#fff;transform:translateX(114.45px) scaleX(0.8553)">via </span>
<span style="top:258.67px;font-size:12.67px;color:#fff;transform:translateX(132.03px) scaleX(0.8872)">MIDI</span>
<span style="top:276.67px;font-size:12.67px;color:#fff;transform:translateX(43.29px) scaleX(0.8930)">Korg </span>
<span style="top:276.67px;font-size:12.67px;color:#fff;transform:translateX(70.16px) scaleX(0.9424)">Triton </span>
<span style="top:276.67px;font-size:12.67px;color:#fff;transform:translateX(103.39px) scaleX(0.9003)">Extreme</span>
<span style="top:294.67px;font-size:12.67px;color:#fff;transform:translateX(43.28px) scaleX(0.8882)">Korg </span>
<span style="top:294.67px;font-size:12.67px;color:#fff;transform:translateX(70.02px) scaleX(0.9374)">Triton </span>
<span style="top:294.67px;font-size:12.67px;color:#fff;transform:translateX(103.07px) scaleX(0.8988)">Extreme.Clone</span>
<span style="top:312.67px;font-size:12.67px;color:#fff;transform:translateX(43.28px) scaleX(0.8816)">Korg </span>
<span style="top:312.67px;font-size:12.67px;color:#fff;transform:translateX(69.82px) scaleX(0.9304)">Triton </span>
<span style="top:312.67px;font-size:12.67px;color:#fff;transform:translateX(102.62px) scaleX(0.8921)">Extreme.Clone </span>
<span style="top:312.67px;font-size:12.67px;color:#fff;transform:translateX(180.39px) scaleX(0.9337)">(2)</span>
<span style="top:330.67px;font-size:12.67px;color:#fff;transform:translateX(43.28px) scaleX(0.8853)">Korg </span>
<span style="top:330.67px;font-size:12.67px;color:#fff;transform:translateX(69.94px) scaleX(0.8954)">Triton-Rack</span>
<span style="top:348.67px;font-size:12.67px;color:#b4b4b4;transform:translateX(44.22px) scaleX(0.8849)">Synthesizers</span>
<span style="top:366.67px;font-size:12.67px;color:#b4b4b4;transform:translateX(44.32px) scaleX(0.9167)">Templates</span>
<span style="top:384.67px;font-size:12.67px;color:#fff;transform:translateX(43.35px) scaleX(0.8317)">TRITON </span>
<span style="top:384.67px;font-size:12.67px;color:#fff;transform:translateX(85.55px) scaleX(0.8887)">Extreme </span>
<span style="top:384.67px;font-size:12.67px;color:#fff;transform:translateX(130.51px) scaleX(0.8808)">Device</span>
<span style="top:402.67px;font-size:12.67px;color:#fff;transform:translateX(43.15px) scaleX(0.8717)">Yamaha </span>
<span style="top:402.67px;font-size:12.67px;color:#fff;transform:translateX(87.03px) scaleX(0.9857)">Motif </span>
<span style="top:402.67px;font-size:12.67px;color:#fff;transform:translateX(117.37px) scaleX(0.8109)">XF</span>
<span style="top:420.67px;font-size:12.67px;color:#fff;transform:translateX(43.15px) scaleX(0.8651)">Yamaha </span>
<span style="top:420.67px;font-size:12.67px;color:#fff;transform:translateX(86.69px) scaleX(0.9782)">Motif </span>
<span style="top:420.67px;font-size:12.67px;color:#fff;transform:translateX(116.81px) scaleX(0.8048)">XF </span>
<span style="top:420.67px;font-size:12.67px;color:#fff;transform:translateX(132.89px) scaleX(0.9190)">(2)</span>
<span style="top:438.67px;font-size:12.67px;color:#fff;transform:translateX(43.15px) scaleX(0.8640)">Yamaha </span>
<span style="top:438.67px;font-size:12.67px;color:#fff;transform:translateX(86.78px) scaleX(0.8418)">MOTIF </span>
<span style="top:438.67px;font-size:12.67px;color:#fff;transform:translateX(123.08px) scaleX(0.7852)">XF6-1 </span>
<span style="top:438.67px;font-size:12.67px;color:#fff;transform:translateX(154.97px) scaleX(0.8662)">Device</span>
<span style="top:95.66px;font-size:12.67px;color:#fff;transform:translateX(297.07px) scaleX(0.8495)">KMo </span>
<span style="top:95.66px;font-size:12.67px;color:#fff;transform:translateX(322.20px) scaleX(0.8465)">External </span>
<span style="top:95.66px;font-size:12.67px;color:#fff;transform:translateX(364.74px) scaleX(0.8132)">via </span>
<span style="top:95.66px;font-size:12.67px;color:#fff;transform:translateX(381.46px) scaleX(0.8351)">MIDI:A</span>
<span style="top:128.00px;font-size:14.0px;color:#a6a6a6;transform:translateX(296.45px) scaleX(0.8686)">Device </span>
<span style="top:128.00px;font-size:14.0px;color:#a6a6a6;transform:translateX(337.04px) scaleX(0.9044)">currently </span>
<span style="top:128.00px;font-size:14.0px;color:#a6a6a6;transform:translateX(389.20px) scaleX(0.8835)">used </span>
<span style="top:128.00px;font-size:14.0px;color:#a6a6a6;transform:translateX(419.62px) scaleX(0.8418)">by</span>
<span style="top:128.00px;font-size:14.0px;color:#bcbcbc;font-weight:700;transform:translateX(435.90px) scaleX(0.8708)">loopMIDI </span>
<span style="top:128.00px;font-size:14.0px;color:#bcbcbc;font-weight:700;transform:translateX(490.80px) scaleX(0.8130)">DAW </span>
<span style="top:128.00px;font-size:14.0px;color:#bcbcbc;font-weight:700;transform:translateX(520.94px) scaleX(0.8508)">to </span>
<span style="top:128.00px;font-size:14.0px;color:#bcbcbc;font-weight:700;transform:translateX(535.51px) scaleX(0.8509)">KMo</span>
<span style="top:156.66px;font-size:12.67px;color:#f4f4f4;transform:translateX(300.85px) scaleX(0.9335)">1</span>
<span style="top:155.66px;font-size:12.67px;color:#b2b2b2;transform:translateX(341.08px) scaleX(0.8566)">(Reserved </span>
<span style="top:155.66px;font-size:12.67px;color:#b2b2b2;transform:translateX(394.41px) scaleX(0.8665)">Channel)</span>
<span style="top:178.66px;font-size:12.67px;color:#f4f4f4;transform:translateX(301.19px) scaleX(0.8835)">2</span>
<span style="top:177.66px;font-size:12.67px;color:#b2b2b2;transform:translateX(341.16px) scaleX(0.9050)">Electric </span>
<span style="top:177.66px;font-size:12.67px;color:#b2b2b2;transform:translateX(381.85px) scaleX(0.8839)">Piano</span>
<span style="top:178.66px;font-size:12.67px;color:#fff;transform:translateX(593.06px) scaleX(0.9050)">Electric </span>
<span style="top:178.66px;font-size:12.67px;color:#fff;transform:translateX(633.75px) scaleX(0.8839)">Piano</span>
<span style="top:200.66px;font-size:12.67px;color:#f4f4f4;transform:translateX(301.34px) scaleX(0.8489)">3</span>
<span style="top:199.66px;font-size:12.67px;color:#b2b2b2;transform:translateX(341.21px) scaleX(0.8555)">Lead</span>
<span style="top:199.66px;font-size:10.67px;color:#00280e;transform:translateX(507.18px) scaleX(0.8169)">Used</span>
<span style="top:200.66px;font-size:12.67px;color:#fff;transform:translateX(593.11px) scaleX(0.8555)">Lead</span>
<span style="top:222.66px;font-size:12.67px;color:#f4f4f4;transform:translateX(301.52px) scaleX(0.7988)">4</span>
<span style="top:221.66px;font-size:12.67px;color:#b2b2b2;transform:translateX(341.20px) scaleX(0.8691)">Drum </span>
<span style="top:221.66px;font-size:12.67px;color:#b2b2b2;transform:translateX(371.16px) scaleX(0.9173)">Kits</span>
<span style="top:221.66px;font-size:10.67px;color:#00280e;transform:translateX(507.18px) scaleX(0.8169)">Used</span>
<span style="top:222.66px;font-size:12.67px;color:#fff;transform:translateX(593.10px) scaleX(0.8691)">Drum </span>
<span style="top:222.66px;font-size:12.67px;color:#fff;transform:translateX(623.06px) scaleX(0.9173)">Kits</span>
<span style="top:244.66px;font-size:12.67px;color:#f4f4f4;transform:translateX(301.32px) scaleX(0.8489)">5</span>
<span style="top:243.66px;font-size:12.67px;color:#b2b2b2;transform:translateX(341.15px) scaleX(0.9096)">Electric </span>
<span style="top:243.66px;font-size:12.67px;color:#b2b2b2;transform:translateX(382.07px) scaleX(0.8754)">Bass</span>
<span style="top:243.66px;font-size:10.67px;color:#00280e;transform:translateX(507.18px) scaleX(0.8169)">Used</span>
<span style="top:244.66px;font-size:12.67px;color:#fff;transform:translateX(593.05px) scaleX(0.9096)">Electric </span>
<span style="top:244.66px;font-size:12.67px;color:#fff;transform:translateX(633.97px) scaleX(0.8754)">Bass</span>
<span style="top:266.67px;font-size:12.67px;color:#f4f4f4;transform:translateX(301.19px) scaleX(0.8723)">6</span>
<span style="top:265.67px;font-size:12.67px;color:#b2b2b2;transform:translateX(341.21px) scaleX(0.8561)">Pad</span>
<span style="top:266.67px;font-size:12.67px;color:#fff;transform:translateX(593.11px) scaleX(0.8561)">Pad</span>
<span style="top:288.67px;font-size:12.67px;color:#f4f4f4;transform:translateX(301.17px) scaleX(0.8854)">7</span>
<span style="top:287.67px;font-size:12.67px;color:#b2b2b2;transform:translateX(341.25px) scaleX(0.8652)">Synth</span>
<span style="top:288.67px;font-size:12.67px;color:#fff;transform:translateX(593.15px) scaleX(0.8652)">Synth</span>
<span style="top:310.67px;font-size:12.67px;color:#f4f4f4;transform:translateX(301.28px) scaleX(0.8578)">8</span>
<span style="top:309.67px;font-size:12.67px;color:#b2b2b2;transform:translateX(341.22px) scaleX(0.8469)">E-Guitar </span>
<span style="top:309.67px;font-size:12.67px;color:#b2b2b2;transform:translateX(384.37px) scaleX(0.8534)">Clean</span>
<span style="top:310.67px;font-size:12.67px;color:#fff;transform:translateX(593.12px) scaleX(0.8469)">E-Guitar </span>
<span style="top:310.67px;font-size:12.67px;color:#fff;transform:translateX(636.27px) scaleX(0.8534)">Clean</span>
<span style="top:332.67px;font-size:12.67px;color:#f4f4f4;transform:translateX(301.23px) scaleX(0.8714)">9</span>
<span style="top:331.67px;font-size:12.67px;color:#b2b2b2;transform:translateX(341.20px) scaleX(0.8691)">Drum </span>
<span style="top:331.67px;font-size:12.67px;color:#b2b2b2;transform:translateX(371.16px) scaleX(0.9173)">Kits</span>
<span style="top:332.67px;font-size:12.67px;color:#fff;transform:translateX(593.10px) scaleX(0.8691)">Drum </span>
<span style="top:332.67px;font-size:12.67px;color:#fff;transform:translateX(623.06px) scaleX(0.9173)">Kits</span>
<span style="top:354.67px;font-size:12.67px;color:#f4f4f4;transform:translateX(301.40px) scaleX(0.7767)">10</span>
<span style="top:353.67px;font-size:12.67px;color:#b2b2b2;transform:translateX(341.08px) scaleX(0.8566)">(Reserved </span>
<span style="top:353.67px;font-size:12.67px;color:#b2b2b2;transform:translateX(394.41px) scaleX(0.8665)">Channel)</span>
<span style="top:376.67px;font-size:12.67px;color:#f4f4f4;transform:translateX(301.33px) scaleX(0.8480)">11</span>
<span style="top:398.67px;font-size:12.67px;color:#f4f4f4;transform:translateX(301.39px) scaleX(0.7855)">12</span>
<span style="top:420.67px;font-size:12.67px;color:#f4f4f4;transform:translateX(301.40px) scaleX(0.7805)">13</span>
<span style="top:442.67px;font-size:12.67px;color:#f4f4f4;transform:translateX(301.41px) scaleX(0.7691)">14</span>
<span style="top:464.67px;font-size:12.67px;color:#f4f4f4;transform:translateX(301.40px) scaleX(0.7790)">15</span>
<span style="top:486.67px;font-size:12.67px;color:#f4f4f4;transform:translateX(301.40px) scaleX(0.7805)">16</span>
</div></body></html>
